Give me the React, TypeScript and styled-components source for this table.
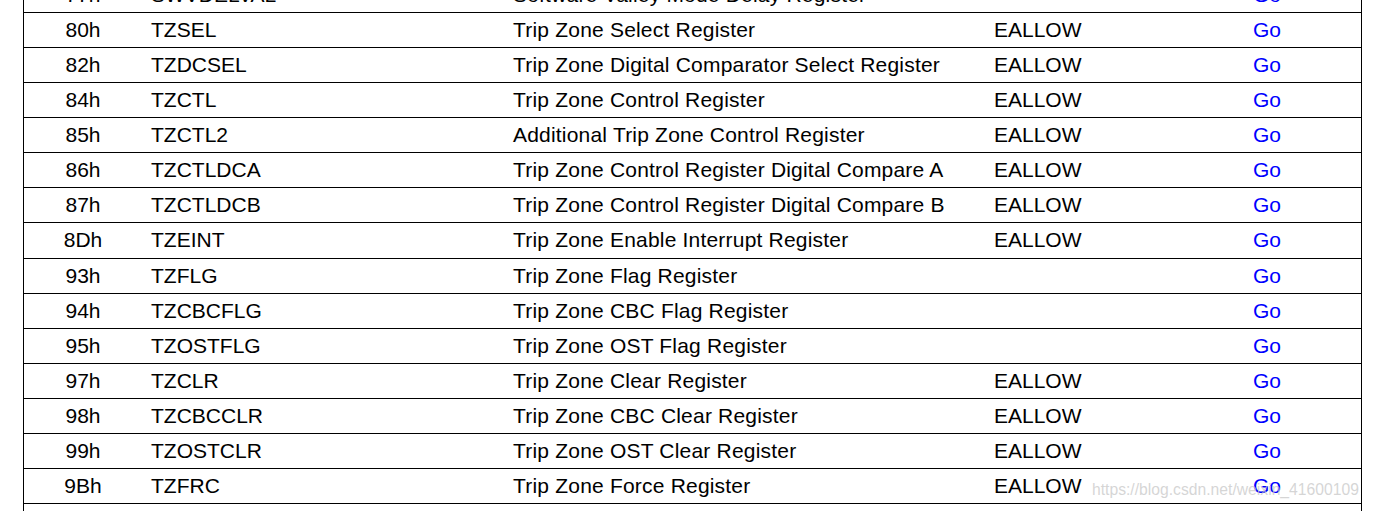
import styled, { createGlobalStyle } from "styled-components";

type Reg = { offset: string; name: string; desc: string; protect: string };

const registers: Reg[] = [
  { offset: "77h", name: "SWVDELVAL", desc: "Software Valley Mode Delay Register", protect: "" },
  { offset: "80h", name: "TZSEL", desc: "Trip Zone Select Register", protect: "EALLOW" },
  { offset: "82h", name: "TZDCSEL", desc: "Trip Zone Digital Comparator Select Register", protect: "EALLOW" },
  { offset: "84h", name: "TZCTL", desc: "Trip Zone Control Register", protect: "EALLOW" },
  { offset: "85h", name: "TZCTL2", desc: "Additional Trip Zone Control Register", protect: "EALLOW" },
  { offset: "86h", name: "TZCTLDCA", desc: "Trip Zone Control Register Digital Compare A", protect: "EALLOW" },
  { offset: "87h", name: "TZCTLDCB", desc: "Trip Zone Control Register Digital Compare B", protect: "EALLOW" },
  { offset: "8Dh", name: "TZEINT", desc: "Trip Zone Enable Interrupt Register", protect: "EALLOW" },
  { offset: "93h", name: "TZFLG", desc: "Trip Zone Flag Register", protect: "" },
  { offset: "94h", name: "TZCBCFLG", desc: "Trip Zone CBC Flag Register", protect: "" },
  { offset: "95h", name: "TZOSTFLG", desc: "Trip Zone OST Flag Register", protect: "" },
  { offset: "97h", name: "TZCLR", desc: "Trip Zone Clear Register", protect: "EALLOW" },
  { offset: "98h", name: "TZCBCCLR", desc: "Trip Zone CBC Clear Register", protect: "EALLOW" },
  { offset: "99h", name: "TZOSTCLR", desc: "Trip Zone OST Clear Register", protect: "EALLOW" },
  { offset: "9Bh", name: "TZFRC", desc: "Trip Zone Force Register", protect: "EALLOW" },
];

const GlobalStyle = createGlobalStyle`
  html, body {
    margin: 0;
    padding: 0;
    background: #fff;
    overflow: hidden;
    height: 511px;
  }
  body {
    font-family: "Liberation Sans", Arial, sans-serif;
    color: #000;
  }
`;

export default function App() {
  return (
    <>
      <GlobalStyle />
      <Page>
        <Table>
          {registers.map((r) => (
            <Row key={r.offset}>
              <Offset>{r.offset}</Offset>
              <Cell>{r.name}</Cell>
              <Cell $spacing={0.2}>{r.desc}</Cell>
              <Cell>{r.protect}</Cell>
              <Cell>
                <GoLink href="#">Go</GoLink>
              </Cell>
            </Row>
          ))}
          <Row />
        </Table>
        <Watermark>https://blog.csdn.net/weixin_41600109</Watermark>
      </Page>
    </>
  );
}

const Page = styled.div`
  position: relative;
  height: 511px;
  overflow: hidden;
`;

const Table = styled.div`
  box-sizing: border-box;
  margin: -22px 0 0 23px;
  width: 1339px;
  border-left: 1px solid #000;
  border-right: 1px solid #000;
`;

const Row = styled.div`
  display: grid;
  grid-template-columns: 118px 362px 481px 259px 1fr;
  height: 35.07px;
  border-bottom: 1px solid #000;
  box-sizing: border-box;
  font-size: 21px;
  line-height: 34px;
`;

const Cell = styled.div<{ $spacing?: number }>`
  padding-left: 9px;
  white-space: nowrap;
  letter-spacing: ${(p) => p.$spacing ?? 0}px;
`;

const Offset = styled.div`
  text-align: center;
`;

const GoLink = styled.a`
  color: #0000ff;
  text-decoration: none;
`;

const Watermark = styled.div`
  position: absolute;
  left: 1092px;
  top: 481px;
  font-size: 15.7px;
  color: rgba(200, 200, 200, 0.75);
  white-space: nowrap;
  pointer-events: none;
`;
